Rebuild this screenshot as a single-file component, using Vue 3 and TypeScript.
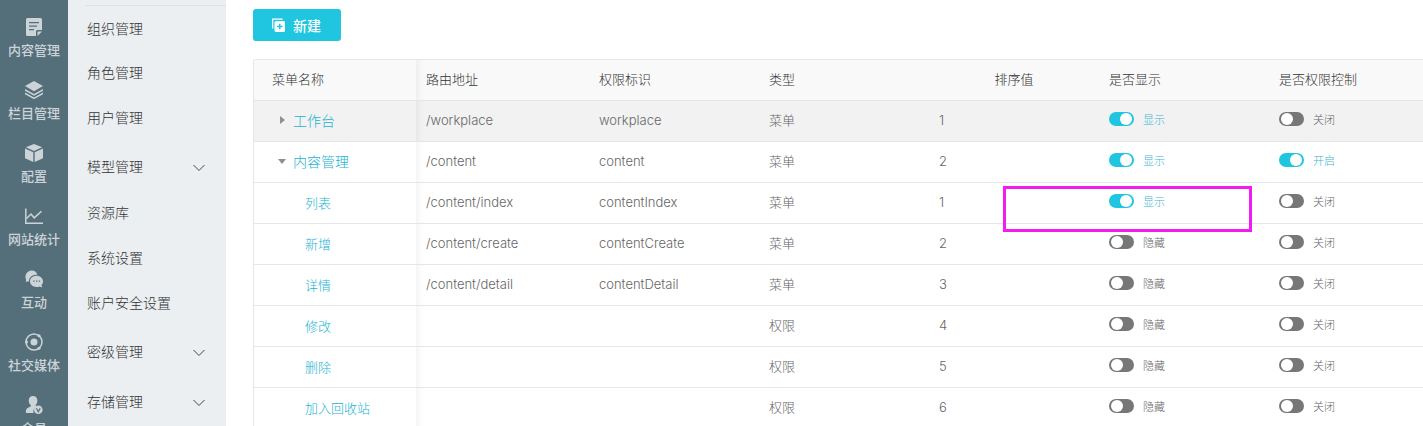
<script setup lang="ts">
import { ref } from 'vue'

interface RailItem {
  label: string
  icon: string
}

interface MenuItem {
  label: string
  expandable?: boolean
}

interface MenuRow {
  name: string
  level: 0 | 1
  open?: boolean
  path: string
  mark: string
  type: string
  sort: number
  shown: boolean
  guarded: boolean
}

const rail: RailItem[] = [
  { label: '内容管理', icon: 'note' },
  { label: '栏目管理', icon: 'layers' },
  { label: '配置', icon: 'cube' },
  { label: '网站统计', icon: 'chart' },
  { label: '互动', icon: 'chat' },
  { label: '社交媒体', icon: 'orbit' },
  { label: '会员', icon: 'member' },
]

const menu: MenuItem[] = [
  { label: '组织管理' },
  { label: '角色管理' },
  { label: '用户管理' },
  { label: '模型管理', expandable: true },
  { label: '资源库' },
  { label: '系统设置' },
  { label: '账户安全设置' },
  { label: '密级管理', expandable: true },
  { label: '存储管理', expandable: true },
]

const rows = ref<MenuRow[]>([
  { name: '工作台', level: 0, open: false, path: '/workplace', mark: 'workplace', type: '菜单', sort: 1, shown: true, guarded: false },
  { name: '内容管理', level: 0, open: true, path: '/content', mark: 'content', type: '菜单', sort: 2, shown: true, guarded: true },
  { name: '列表', level: 1, path: '/content/index', mark: 'contentIndex', type: '菜单', sort: 1, shown: true, guarded: false },
  { name: '新增', level: 1, path: '/content/create', mark: 'contentCreate', type: '菜单', sort: 2, shown: false, guarded: false },
  { name: '详情', level: 1, path: '/content/detail', mark: 'contentDetail', type: '菜单', sort: 3, shown: false, guarded: false },
  { name: '修改', level: 1, path: '', mark: '', type: '权限', sort: 4, shown: false, guarded: false },
  { name: '删除', level: 1, path: '', mark: '', type: '权限', sort: 5, shown: false, guarded: false },
  { name: '加入回收站', level: 1, path: '', mark: '', type: '权限', sort: 6, shown: false, guarded: false },
])
</script>

<template>
  <div class="app">
    <nav class="rail" aria-label="主导航">
      <a v-for="item in rail" :key="item.label" href="#" class="rail-item">
        <svg class="rail-icon" viewBox="0 0 18 18" aria-hidden="true">
          <template v-if="item.icon === 'note'">
            <path class="fill" d="M2.500 0h13a1.500 1.500 0 0 1 1.500 1.500V12h-4.500a1.500 1.500 0 0 0-1.500 1.500V18H2.500A1.500 1.500 0 0 1 1 16.500v-15A1.500 1.500 0 0 1 2.500 0z" />
            <path class="fill" d="M12.500 18v-3.500a1 1 0 0 1 1-1H17z" />
            <path class="cut" d="M4 4.700h10M4 8.200h8M4 11.700h5" />
          </template>
          <template v-else-if="item.icon === 'layers'">
            <path class="fill" d="M9 0l9 5-9 5.200L0 5z" />
            <path class="fill" d="M0 8l9 5 9-5v1.700L9 14.700 0 9.700z" />
            <path class="fill" d="M0 11.500l9 5 9-5v1.700l-9 5-9-5z" />
          </template>
          <template v-else-if="item.icon === 'cube'">
            <path class="fill" d="M9 0l8.200 3.300L9 7 .8 3.300z" />
            <path class="fill" d="M0 4.500l8.300 3.700V18L0 14.200z" />
            <path class="fill" d="M18 4.500L9.700 8.200V18l8.300-3.800z" />
          </template>
          <template v-else-if="item.icon === 'chart'">
            <path class="line" d="M.8 1.500v14.700H18" />
            <path class="line" d="M1.500 11.500L6 7l3.200 3.800 7.300-6.600" />
          </template>
          <template v-else-if="item.icon === 'chat'">
            <path class="fill" d="M6.500.6a6 6 0 0 1 5.800 4.200C7.500 4.500 4 7.300 4 11v.8l-1.200-.5-2 1 .4-2.500A6.200 6.200 0 0 1 6.500.6z" />
            <path class="fill" d="M11.500 5.700c3.700 0 6.500 2.500 6.500 5.500 0 1.700-.6 2.900-1.500 3.900l.7 2.400-2.600-1.100c-.9.400-2 .600-3.100.600C7.800 17 5 14.500 5 11.300s2.800-5.600 6.500-5.600z" />
            <path class="hole" d="M8.200 10.500h1.300v1.300H8.200zM11 10.500h1.300v1.300H11zM13.800 10.500h1.300v1.300h-1.300z" />
          </template>
          <template v-else-if="item.icon === 'orbit'">
            <circle class="line" cx="9" cy="9" r="8" />
            <circle class="fill" cx="9" cy="9" r="3.500" />
            <circle class="fill" cx="1.500" cy="9" r="1.500" />
            <circle class="fill" cx="14" cy="2.800" r="1.500" />
            <circle class="fill" cx="14" cy="15.200" r="1.500" />
          </template>
          <template v-else>
            <path class="fill" d="M8 0c2.700 0 4.400 2 4.400 4.600 0 1.700-.6 3.300-1.600 4.200-.4.600-.2 1.200.6 1.600l.5.300A5.300 5.300 0 0 0 8.600 17H2C1 17 .6 16.400.8 15.500c.3-2.500 1-3.300 3.200-4.200 1.600-.6 2-1 1.900-1.700 0-.3-.2-.5-.5-.8-1-.9-1.700-2.500-1.700-4.200C3.700 2 5.300 0 8 0z" />
            <circle class="fill" cx="13.300" cy="13.700" r="4.300" />
            <path class="cut" d="M11.400 12.200l1.900 3.600 1.900-3.600" />
          </template>
        </svg>
        <span class="rail-label">{{ item.label }}</span>
      </a>
    </nav>

    <nav class="side" aria-label="系统菜单">
      <a
        v-for="item in menu"
        :key="item.label"
        href="#"
        class="side-item"
        :class="{ expandable: item.expandable }"
      >
        <span>{{ item.label }}</span>
        <svg v-if="item.expandable" class="chevron" viewBox="0 0 12 8" aria-hidden="true">
          <path d="M.5 1L6 6.500 11.500 1" />
        </svg>
      </a>
    </nav>

    <main class="main">
      <button type="button" class="create">
        <svg class="create-icon" viewBox="0 0 13 14" aria-hidden="true">
          <path class="create-back" d="M.7 10.500V1.200h10" />
          <rect class="create-front" x="2.500" y="3" width="10.500" height="11" rx="1.500" />
          <path class="create-plus" d="M7.750 5.700v5.600M5 8.500h5.500" />
        </svg>
        <span>新建</span>
      </button>

      <div class="table-box">
        <table class="grid">
          <colgroup>
            <col class="col-name" />
            <col class="col-path" />
            <col class="col-std" />
            <col class="col-std" />
            <col class="col-std" />
            <col class="col-std" />
            <col />
          </colgroup>
          <thead>
            <tr>
              <th scope="col" class="name-cell">菜单名称</th>
              <th scope="col" class="after-fixed">路由地址</th>
              <th scope="col">权限标识</th>
              <th scope="col">类型</th>
              <th scope="col" class="centered">排序值</th>
              <th scope="col">是否显示</th>
              <th scope="col">是否权限控制</th>
            </tr>
          </thead>
          <tbody>
            <tr v-for="(row, i) in rows" :key="row.name + i" :class="{ active: i === 0 }">
              <td class="name-cell">
                <div class="name" :class="row.level === 0 ? 'root' : 'child'">
                  <button
                    v-if="row.level === 0"
                    type="button"
                    class="toggle"
                    :aria-expanded="row.open"
                    :aria-label="row.name"
                    @click="row.open = !row.open"
                  >
                    <svg viewBox="0 0 8 8" aria-hidden="true">
                      <path :d="row.open ? 'M0 2h8L4 7z' : 'M2 0l5 4-5 4z'" />
                    </svg>
                  </button>
                  <a href="#">{{ row.name }}</a>
                </div>
              </td>
              <td class="after-fixed">{{ row.path }}</td>
              <td>{{ row.mark }}</td>
              <td>{{ row.type }}</td>
              <td>{{ row.sort }}</td>
              <td>
                <label class="switch">
                  <input v-model="row.shown" type="checkbox" role="switch" />
                  <span>{{ row.shown ? '显示' : '隐藏' }}</span>
                </label>
              </td>
              <td>
                <label class="switch">
                  <input v-model="row.guarded" type="checkbox" role="switch" />
                  <span>{{ row.guarded ? '开启' : '关闭' }}</span>
                </label>
              </td>
            </tr>
          </tbody>
        </table>
        <div class="marker"></div>
      </div>
    </main>
  </div>
</template>

<style>
body {
  margin: 0;
  background: #fff;
}
</style>

<style scoped>
.app {
  display: flex;
  height: 100vh;
  overflow: hidden;
  font-family: Inter, "Noto Sans CJK SC", sans-serif;
  font-size: 13px;
  font-weight: 300;
  color: #666;
}

a {
  color: inherit;
  text-decoration: none;
}

button {
  font: inherit;
  border: 0;
  padding: 0;
  cursor: pointer;
}

.rail {
  flex: 0 0 68px;
  background: #546e7a;
  color: #ccd4d8;
}

.rail-item {
  display: flex;
  flex-direction: column;
  align-items: center;
  gap: 5px;
  height: 45px;
  padding-top: 18px;
}

.rail-icon {
  flex: none;
  width: 18px;
  height: 18px;
}

.rail-icon .fill {
  fill: #ccd4d8;
}

.rail-icon .hole {
  fill: #546e7a;
}

.rail-icon .line {
  fill: none;
  stroke: #ccd4d8;
  stroke-width: 1.5;
}

.rail-icon .cut {
  fill: none;
  stroke: #546e7a;
  stroke-width: 1.2;
}

.rail-label {
  font-weight: 500;
  line-height: 18px;
}

.side {
  flex: 0 0 158px;
  box-sizing: border-box;
  padding-top: 5px;
  background: #ebeff2;
  color: #333;
  font-size: 14px;
}

.side-item {
  display: flex;
  align-items: center;
  justify-content: space-between;
  box-sizing: border-box;
  height: 45px;
  padding: 0 21px 1px 2px;
  margin-left: 17px;
}

.side-item:first-child {
  border-top: 1px solid #dde1e4;
}

.side-item.expandable {
  height: 50px;
  padding-top: 3px;
}

.chevron {
  width: 12px;
  height: 8px;
  margin-top: 3px;
  fill: none;
  stroke: #444;
}

.main {
  flex: 1;
  min-width: 0;
  padding: 9px 0 0 27px;
}

.create {
  display: flex;
  align-items: center;
  gap: 8px;
  height: 32px;
  padding: 0 20px 0 19px;
  border-radius: 3px;
  background: #20c6e0;
  color: #fff;
  font-size: 14px;
  font-weight: 500;
}

.create-icon {
  width: 13px;
  height: 14px;
}

.create-back {
  fill: none;
  stroke: #fff;
  stroke-width: 1.2;
}

.create-front {
  fill: #fff;
}

.create-plus {
  fill: none;
  stroke: #20c6e0;
  stroke-width: 1.5;
}

.table-box {
  position: relative;
  margin-top: 18px;
  border: 1px solid #e6e6e6;
  border-right: 0;
  border-radius: 3px 0 0 0;
}

.grid {
  width: 100%;
  table-layout: fixed;
  border-collapse: separate;
  border-spacing: 0;
}

.col-name {
  width: 162px;
}

.col-path {
  width: 173px;
}

.col-std {
  width: 170px;
}

th,
td {
  box-sizing: border-box;
  height: 41px;
  padding: 0 10px 2px;
  border-bottom: 1px solid #e6e6e6;
  text-align: left;
  vertical-align: middle;
  line-height: 20px;
}

th {
  background: #f9f9f9;
  color: #333;
  font-weight: 300;
}

.centered {
  text-align: center;
}

.active td {
  background: #f2f2f2;
}

.name-cell {
  padding-left: 18px;
}

td.name-cell {
  padding-bottom: 0;
}

.after-fixed {
  box-shadow: inset 9px 0 8px -8px rgba(0, 0, 0, 0.07);
}

.name {
  display: flex;
  align-items: center;
  color: #20b4d4;
}

.name.root {
  gap: 7px;
  padding-left: 6px;
  font-size: 14px;
}

.name.child {
  padding-left: 33px;
}

.toggle {
  display: flex;
  width: 8px;
  height: 8px;
  margin-bottom: 2px;
  background: none;
}

.toggle svg {
  width: 8px;
  height: 8px;
  fill: #8f8f8f;
}

.switch {
  display: flex;
  align-items: center;
  gap: 9px;
  font-size: 11px;
  line-height: 18px;
}

.switch input {
  appearance: none;
  display: flex;
  flex: none;
  box-sizing: border-box;
  width: 25px;
  height: 14px;
  margin: 0 0 3px;
  padding: 1px 2px;
  border-radius: 7px;
  background: #777;
  cursor: pointer;
}

.switch input::before {
  content: "";
  width: 12px;
  height: 12px;
  border-radius: 50%;
  background: #fff;
}

.switch input:checked {
  justify-content: flex-end;
  background: #20c6e0;
}

.switch input:checked + span {
  color: #3cb6d3;
}

.marker {
  position: absolute;
  top: 126px;
  left: 749px;
  box-sizing: border-box;
  width: 249px;
  height: 46px;
  border: 3px solid #f31bf3;
  pointer-events: none;
}
</style>
